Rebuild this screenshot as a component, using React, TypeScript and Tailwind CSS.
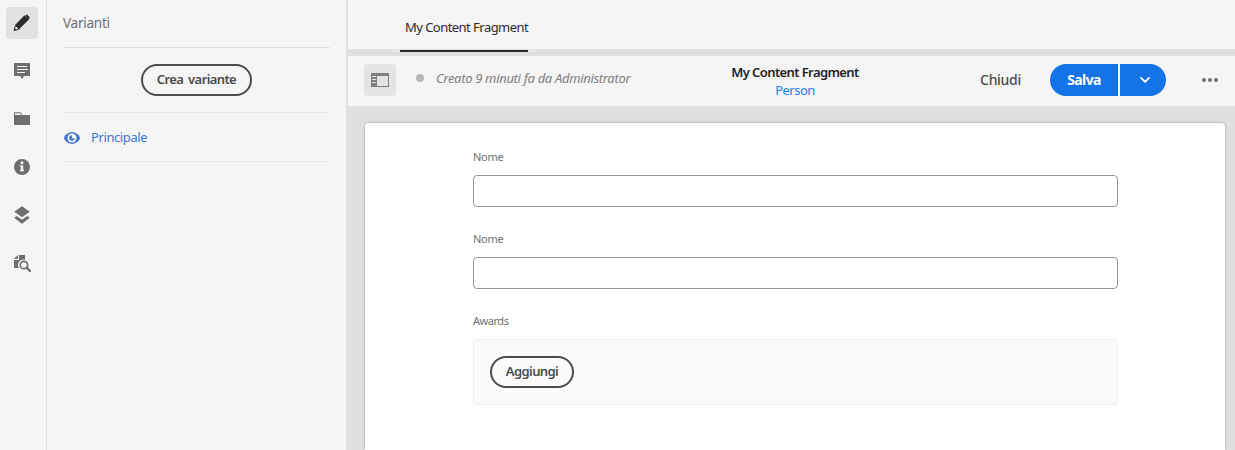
import React from "react";

function PencilIcon() {
  return (
    <svg width="18" height="18" viewBox="0 0 18 18">
      <path d="M12.3 1.4 13.4.7c.3-.2.6-.1.9.1l2.2 2.3c.3.3.3.7 0 1l-1 1.1z" fill="#2c2c2c" />
      <path d="M11.5 1.3 16 5.5 6.3 15.1 2.1 11z" fill="#2c2c2c" />
      <path d="M2.5 11.4 1.1 16.6 6.2 15.1z" fill="#e8e8e8" stroke="#2c2c2c" strokeWidth="1" strokeLinejoin="round" />
      <path d="M1 16.8 1.7 14.4 3.3 16z" fill="#2c2c2c" />
    </svg>
  );
}

function CommentIcon() {
  return (
    <svg width="18" height="18" viewBox="0 0 18 18" fill="#6e6e6e">
      <path d="M1 1h16v13h-6l-2 3-2-3H1z" />
      <path d="M4 4h10v1H4zM4 7h11v1H4zM4 10h8v1H4z" fill="#f5f5f5" />
    </svg>
  );
}

function FolderIcon() {
  return (
    <svg width="18" height="18" viewBox="0 0 18 18" fill="#6e6e6e">
      <path d="M1 3.2c0-.6.4-1 1-1h5.2c.4 0 .7.2.9.5L9.3 5H17v10H1z" />
      <path d="M2 3.3h5.1L8.3 5H2z" fill="#f5f5f5" />
    </svg>
  );
}

function InfoIcon() {
  return (
    <svg width="18" height="18" viewBox="0 0 18 18">
      <circle cx="9" cy="9" r="8" fill="#6e6e6e" />
      <circle cx="9" cy="4.7" r="1.5" fill="#f5f5f5" />
      <path d="M7 7.2h3.2v4.6H11V13.3H7v-1.5h.8V8.7H7z" fill="#f5f5f5" />
    </svg>
  );
}

function LayersIcon() {
  return (
    <svg width="18" height="18" viewBox="0 0 18 18" fill="#6e6e6e">
      <path d="M9 .2 16.8 5.7 9 11.2 1.2 5.7z" />
      <path d="M3.6 9.9 9 13.7l5.4-3.8 2.4 1.9L9 17.7l-7.8-5.9z" />
    </svg>
  );
}

function SearchAssetIcon() {
  return (
    <svg width="18" height="18" viewBox="0 0 18 18" fill="#6e6e6e">
      <path d="M4.9 1 1 4.9h3.9z" />
      <path d="M6 1h6v4.7A5.3 5.3 0 0 0 6.2 14H1V6h5z" />
      <circle cx="11" cy="11" r="3.7" fill="none" stroke="#6e6e6e" strokeWidth="1.7" />
      <path d="m13.6 13.6 3.3 3.3" stroke="#6e6e6e" strokeWidth="2.2" strokeLinecap="round" />
    </svg>
  );
}

function EyeIcon() {
  return (
    <svg width="16" height="12" viewBox="0 0 16 12">
      <path d="M8 0C3.8 0 0 4.3 0 6s3.8 6 8 6 8-4.3 8-6-3.8-6-8-6z" fill="#4076cf" />
      <circle cx="8" cy="6" r="4.5" fill="#f5f5f5" />
      <path d="M8 3.2A2.8 2.8 0 1 0 10.8 6 1.6 1.6 0 0 1 8 5z" fill="#4076cf" />
    </svg>
  );
}

function PanelIcon() {
  return (
    <svg width="18" height="14" viewBox="0 0 18 14">
      <path d="M0 0h18v14H0z" fill="#7f7f7f" />
      <path d="M6 3h11v10H6z" fill="#e3e3e3" />
      <path d="M1 3h4v1H1zM1 6h4v1H1zM1 9h4v1H1z" fill="#e3e3e3" />
    </svg>
  );
}

const railIcons = [CommentIcon, FolderIcon, InfoIcon, LayersIcon, SearchAssetIcon];

function Rail() {
  return (
    <nav className="flex w-[47px] shrink-0 flex-col items-center gap-4 border-r border-[#e1e1e1] pr-0.5 pt-[7px]">
      <button className="flex size-8 items-center justify-center rounded bg-[#e1e1e1]" aria-label="Varianti">
        <PencilIcon />
      </button>
      {railIcons.map((Icon, i) => (
        <button key={i} className="flex size-8 items-center justify-center">
          <Icon />
        </button>
      ))}
    </nav>
  );
}

function Variations() {
  return (
    <aside className="flex w-[301px] shrink-0 flex-col border-r-2 border-[#e0e0e0] pl-4 pr-4">
      <h2 className="flex h-12 items-center border-b border-[#e0e0e0] text-[13.5px] tracking-[-0.25px] text-[#6e6e6e]">
        Varianti
      </h2>
      <div className="flex h-[65px] items-center justify-center border-b border-[#e9e9e9]">
        <button className="h-8 w-[111px] rounded-full border-2 border-[#4b4b4b] text-[13px] font-semibold tracking-[-0.6px] whitespace-nowrap text-[#4b4b4b] [word-spacing:2px]">
          Crea variante
        </button>
      </div>
      <div className="flex h-[49px] items-center gap-[11px] border-b border-[#e9e9e9] pl-px pt-px text-[13px] tracking-[-0.4px] text-[#4076cf]">
        <EyeIcon />
        <span className="pt-px">Principale</span>
      </div>
    </aside>
  );
}

function Tabs() {
  return (
    <div className="flex h-14 shrink-0 flex-col bg-[#e0e0e0]">
      <div className="flex h-[49px] items-center bg-[#f5f5f5] pl-[57px] pt-1.5 text-[13px] tracking-[-0.54px] whitespace-nowrap text-[#2c2c2c]">
        My Content Fragment
      </div>
      <div className="mt-px ml-11 h-0.5 w-36 border-x-8 border-[#e9e9e9] bg-[#2c2c2c]" />
    </div>
  );
}

function Toolbar() {
  return (
    <div className="flex h-[50px] shrink-0 items-start bg-[#f5f5f5] pl-4 pt-2">
      <button className="flex size-8 shrink-0 items-center justify-center rounded bg-[#e3e3e3]" aria-label="Pannello">
        <PanelIcon />
      </button>
      <span className="mt-2.5 ml-5 size-2 shrink-0 rounded-full bg-[#b8b8b8]" />
      <span className="ml-3 w-[220px] shrink-0 pt-1 text-[13px] tracking-[-0.32px] leading-5 whitespace-nowrap text-[#808080] italic">
        Creato 9 minuti fa da Administrator
      </span>
      <div className="-mt-px ml-[59px] flex w-40 shrink-0 flex-col items-center text-[13px] leading-[18px] whitespace-nowrap">
        <span className="font-semibold tracking-[-0.6px] text-[#1f1f1f]">My Content Fragment</span>
        <span className="tracking-[-0.5px] text-[#2680eb]">Person</span>
      </div>
      <button className="ml-[105px] h-8 w-[41px] shrink-0 pb-0.5 text-[14px] font-medium tracking-[-0.3px] text-[#4b4b4b]">
        Chiudi
      </button>
      <div className="ml-[29px] flex h-8 w-[116px] shrink-0 gap-0.5">
        <button className="w-[68px] rounded-l-full bg-[#1473e6] pb-px text-[14px] font-bold tracking-[-0.6px] text-white">
          Salva
        </button>
        <button className="flex w-[46px] items-center justify-center rounded-r-full bg-[#1473e6] pl-1" aria-label="Altre azioni">
          <svg width="10" height="6" viewBox="0 0 10 6" fill="none" stroke="white" strokeWidth="1.8" strokeLinecap="round" strokeLinejoin="round">
            <path d="m1 .9 4 4 4-4" />
          </svg>
        </button>
      </div>
      <button className="ml-9 flex h-8 items-center gap-0.5" aria-label="Altro">
        <span className="size-1 rounded-full bg-[#6e6e6e]" />
        <span className="size-1 rounded-full bg-[#6e6e6e]" />
        <span className="size-1 rounded-full bg-[#6e6e6e]" />
      </button>
    </div>
  );
}

function Field({ label }: { label: string }) {
  return (
    <label className="flex h-[82px] flex-col">
      <span className="h-[26px] text-[11px] leading-4 tracking-[-0.3px] text-[#6e6e6e]">{label}</span>
      <input className="h-8 rounded border border-[#959595] bg-white px-3 text-[13px]" />
    </label>
  );
}

export default function App() {
  return (
    <div className="flex h-[450px] w-[1235px] overflow-hidden bg-[#f5f5f5] font-['Noto_Sans',sans-serif]">
      <Rail />
      <Variations />
      <main className="flex min-w-0 flex-1 flex-col bg-[#e0e0e0]">
        <Tabs />
        <Toolbar />
        <section className="mt-[17px] mr-2.5 ml-[17px] flex-1 rounded-t bg-white pr-[107px] pl-[108px] pt-[26px] shadow-[0_0_3px_rgba(0,0,0,0.3)]">
          <Field label="Nome" />
          <Field label="Nome" />
          <div className="flex flex-col">
            <span className="h-[26px] text-[11px] leading-4 tracking-[-0.45px] text-[#6e6e6e]">Awards</span>
            <div className="h-[66px] rounded border border-[#eeeeee] bg-[#fbfbfb] p-4">
              <button className="h-8 w-[84px] rounded-full border-2 border-[#4b4b4b] text-[13px] font-semibold tracking-[-0.6px] text-[#4b4b4b]">
                Aggiungi
              </button>
            </div>
          </div>
        </section>
      </main>
    </div>
  );
}
